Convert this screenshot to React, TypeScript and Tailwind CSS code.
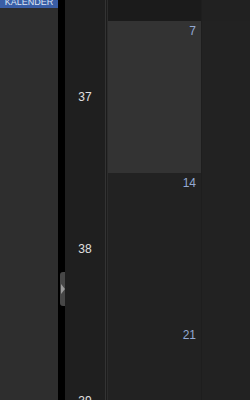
const weeks = [
  { wk: 37, days: [7, 8], hl: 0 },
  { wk: 38, days: [14, 15], hl: -1 },
  { wk: 39, days: [21, 22], hl: -1 },
];

export default function App() {
  return (
    <div
      className="flex h-[400px] w-[250px] overflow-hidden bg-black text-[11px]"
      style={{ fontFamily: '"Liberation Sans", Arial, sans-serif' }}
    >
      {/* sidebar */}
      <div className="flex w-[58px] shrink-0 flex-col bg-[#2e2e2e]">
        <div className="flex h-[8px] items-end justify-center overflow-hidden bg-[#3a5ea6] text-[9px] leading-[12px] text-[#dde6f5]">
          KALENDER
        </div>
      </div>

      {/* splitter */}
      <div className="relative w-[7px] shrink-0 bg-black">
        <div className="absolute left-[2px] top-[272px] flex h-[34px] w-[5px] items-center justify-end rounded-l-[3px] bg-[#474747]">
          <div className="h-0 w-0 border-y-[5px] border-l-[4px] border-y-transparent border-l-[#9a9a9a]" />
        </div>
      </div>

      {/* week numbers */}
      <div className="flex w-[40px] shrink-0 flex-col bg-[#1f1f1f]">
        <div className="h-[21px] shrink-0" />
        {weeks.map((w) => (
          <div key={w.wk} className="flex h-[152px] shrink-0 items-center justify-center text-[12px] text-[#e0e0e0]">
            {w.wk}
          </div>
        ))}
      </div>

      <div className="w-px shrink-0 bg-[#333]" />
      <div className="w-px shrink-0 bg-[#1c1c1c]" />
      <div className="w-px shrink-0 bg-[#2c2c2c]" />

      {/* grid */}
      <div className="flex flex-1 flex-col">
        <div className="flex h-[21px] shrink-0">
          <div className="w-[93px] shrink-0 bg-[#1b1b1b]" />
          <div className="flex-1 border-l border-[#1e1e1e] bg-[#212121]" />
        </div>
        {weeks.map((w) => (
          <div key={w.wk} className="flex h-[152px] shrink-0">
            <div
              className={`w-[93px] shrink-0 pr-[5px] pt-[1px] text-right text-[12px] text-[#93a9d3] ${
                w.hl === 0 ? "bg-[#333333]" : "bg-[#222222]"
              }`}
            >
              {w.days[0]}
            </div>
            <div className="flex-1 border-l border-[#1e1e1e] bg-[#222222]" />
          </div>
        ))}
      </div>
    </div>
  );
}
